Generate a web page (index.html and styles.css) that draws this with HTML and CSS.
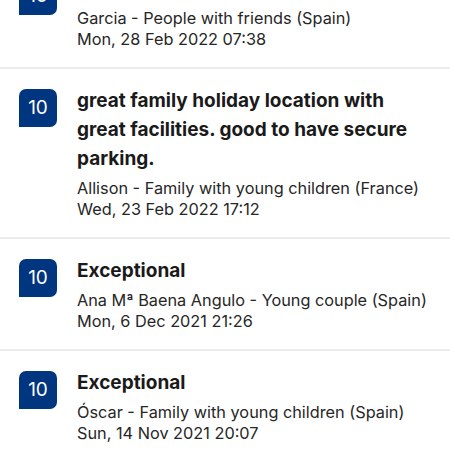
FILE: index.html
```html
<!DOCTYPE html>
<html lang="en">
<head>
    <meta charset="UTF-8">
    <meta name="viewport" content="width=device-width, initial-scale=1.0">
    <title>Reviews</title>
    <link rel="stylesheet" href="styles.css">
</head>
<body>
    <div class="reviews">
        <div class="review first">
            <div class="score">10</div>
            <div class="body">
                <p class="title">Superb</p>
                <p class="meta">Garcia - People with friends (Spain)</p>
                <p class="meta">Mon, 28 Feb 2022 07:38</p>
            </div>
        </div>

        <div class="review">
            <div class="score">10</div>
            <div class="body">
                <p class="title">great family holiday location with great facilities. good to have secure parking.</p>
                <p class="meta">Allison - Family with young children (France)</p>
                <p class="meta">Wed, 23 Feb 2022 17:12</p>
            </div>
        </div>

        <div class="review">
            <div class="score">10</div>
            <div class="body">
                <p class="title">Exceptional</p>
                <p class="meta">Ana Mª Baena Angulo - Young couple (Spain)</p>
                <p class="meta">Mon, 6 Dec 2021 21:26</p>
            </div>
        </div>

        <div class="review">
            <div class="score">10</div>
            <div class="body">
                <p class="title">Exceptional</p>
                <p class="meta">Óscar - Family with young children (Spain)</p>
                <p class="meta">Sun, 14 Nov 2021 20:07</p>
            </div>
        </div>
    </div>
</body>
</html>
```

FILE: styles.css
```css
body {
    background-color: white;
    font-family: Inter, "Noto Sans", sans-serif;
    margin: 0;
    padding: 0;
    overflow: hidden;
    color: #1a1a1a;
}
.reviews {
    margin-top: -43px;
}
.review {
    display: flex;
    gap: 20px;
    padding: 20px 16px 17px 19px;
    border-top: 2px solid #ececec;
}
.review.first {
    border-top: none;
}
.score {
    flex: none;
    width: 38px;
    height: 38px;
    background-color: #003580;
    color: white;
    border-radius: 7px 7px 7px 0;
    font-size: 19px;
    line-height: 38px;
    text-align: center;
}
.body {
    flex: 1;
}
.body p {
    margin: 0;
}
.title {
    font-size: 19px;
    font-weight: bold;
    line-height: 29px;
    margin-top: -3px !important;
    margin-bottom: 5px !important;
}
.meta {
    font-size: 16.3px;
    line-height: 21px;
    color: #262626;
}
```
